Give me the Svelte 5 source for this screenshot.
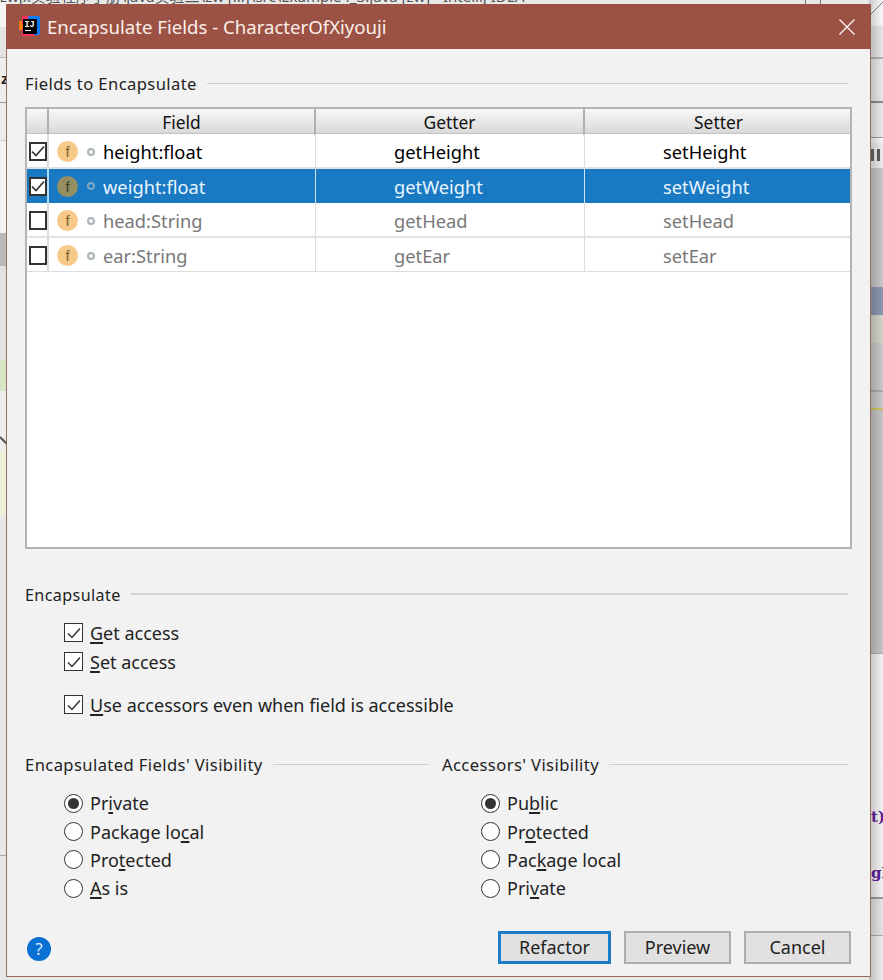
<script>
  const rows = [
    { field: 'height:float', getter: 'getHeight', setter: 'setHeight', on: true, sel: false },
    { field: 'weight:float', getter: 'getWeight', setter: 'setWeight', on: true, sel: true },
    { field: 'head:String', getter: 'getHead', setter: 'setHead', on: false, sel: false },
    { field: 'ear:String', getter: 'getEar', setter: 'setEar', on: false, sel: false }
  ];
  const leftBands = [
    [0, 27, '#f4f4f4'], [27, 30, '#e4e4e4'], [57, 1, '#bbb'], [58, 44, '#eeeeee'], [102, 1, '#999'],
    [103, 37, '#ececec'], [140, 1, '#ccc'], [141, 92, '#f4f4f4'], [233, 33, '#b9b9b9'], [266, 94, '#e2e2e2'],
    [360, 31, '#d6e6c4'], [391, 60, '#eeeeee'], [451, 64, '#eef2d8'], [515, 340, '#e8e8e8'],
    [855, 1, '#aaa'], [856, 124, '#e8e8e8']
  ];
  const rightBands = [
    [0, 26, '#fafafa'], [26, 31, '#e6e6e6'], [57, 2, '#b4b4b4'], [59, 42, '#e9e9e9'], [101, 2, '#8a8a8a'],
    [103, 34, '#e9e9e9'], [137, 1, '#999'], [138, 5, '#f6f6f6'], [143, 25, '#ececec'], [168, 119, '#c6c6c6'],
    [287, 28, '#8c98b2'], [315, 28, '#d3d3c6'], [343, 47, '#c8c8c8'], [390, 2, '#aaa'], [392, 16, '#c8c8c8'],
    [408, 2, '#cdc65a'], [410, 243, '#c4c4c4'], [653, 1, '#aaa'], [654, 243, '#f3f3f3'], [897, 2, '#9a9a9a'],
    [899, 36, '#e4e4e4'], [935, 1, '#aaa'], [936, 44, '#ececec']
  ];
</script>

<div class="desk">
  <div class="backdrop" aria-hidden="true">
    {#each leftBands as b}
      <div class="band left" style="top:{b[0]}px;height:{b[1]}px;background:{b[2]}"></div>
    {/each}
    {#each rightBands as b}
      <div class="band right" style="top:{b[0]}px;height:{b[1]}px;background:{b[2]}"></div>
    {/each}
    <div class="shade"></div>
    <div class="ide-title">zwjx实验程序手册\java实验二\zw [...]\src\Example4_3.java [zw] - IntelliJ IDEA</div>
    <div class="ide-max"></div>
    <svg class="ide-close" width="12" height="12" viewBox="0 0 12 12"><path d="M0 12 12 0" stroke="#777" fill="none"/></svg>
    <div class="ide-z">z</div>
    <svg class="ide-chev" width="7" height="9" viewBox="0 0 7 9"><path d="M0 1 7 8" stroke="#555" stroke-width="2" fill="none"/></svg>
    <div class="ide-pause"><i></i><i></i></div>
    <div class="ide-code t">t)</div>
    <div class="ide-code g">gh</div>
    <div class="ide-status">11:1 &nbsp; LF &nbsp;&nbsp; 7:81 &nbsp;&nbsp; CRLF &nbsp;&nbsp; UTF-8 &nbsp;&nbsp; 4 &nbsp;&nbsp;&nbsp;&nbsp;&nbsp; 8</div>
  </div>

  <div class="dialog">
    <header class="titlebar">
      <svg class="logo" width="21" height="21" viewBox="0 0 21 21">
        <rect x="0" y="5" width="8" height="9" fill="#f97a12"/>
        <rect x="3" y="0" width="9" height="8" fill="#fe315d"/>
        <rect x="9" y="0" width="12" height="19" rx="2" fill="#087cfa"/>
        <rect x="3" y="13" width="12" height="7" fill="#fe315d"/>
        <rect x="4" y="3" width="14" height="15" fill="#000"/>
        <text x="5.5" y="11" class="logo-t">IJ</text>
        <rect x="6" y="14" width="6" height="1" fill="#fff"/>
      </svg>
      <span class="title">Encapsulate Fields - CharacterOfXiyouji</span>
      <svg class="close" width="16" height="16" viewBox="0 0 16 16"><path d="M0.5 0.5 15.5 15.5M15.5 0.5 0.5 15.5" stroke="#fff" stroke-width="1.2" fill="none"/></svg>
    </header>

    <div class="content">
      <div class="section s1"><span>Fields to Encapsulate</span><i></i></div>

      <div class="table">
        <div class="thead">
          <div class="th"></div>
          <div class="th">Field</div>
          <div class="th">Getter</div>
          <div class="th">Setter</div>
        </div>
        {#each rows as r, i}
          <div class="row" class:sel={r.sel} class:off={!r.on} class:last={i === 3}>
            <div class="cell cc"><span class="tcheck">{#if r.on}<svg width="14" height="14" viewBox="0 0 14 14"><path d="M1 7.5 5 11.5 13 2.5" stroke="#333" stroke-width="1.7" fill="none"/></svg>{/if}</span></div>
            <div class="cell fc">
              <span class="ficon">f</span>
              <span class="dot"></span>
              <span>{r.field}</span>
            </div>
            <div class="cell gc">{r.getter}</div>
            <div class="cell sc">{r.setter}</div>
          </div>
        {/each}
      </div>

      <div class="section s2"><span>Encapsulate</span><i></i></div>

      <div class="checks">
        <label class="opt"><span class="box"><svg width="14" height="14" viewBox="0 0 14 14"><path d="M1 7.5 5 11.5 13 2.5" stroke="#333" stroke-width="1.5" fill="none"/></svg></span><span><u>G</u>et access</span></label>
        <label class="opt"><span class="box"><svg width="14" height="14" viewBox="0 0 14 14"><path d="M1 7.5 5 11.5 13 2.5" stroke="#333" stroke-width="1.5" fill="none"/></svg></span><span><u>S</u>et access</span></label>
        <label class="opt use"><span class="box"><svg width="14" height="14" viewBox="0 0 14 14"><path d="M1 7.5 5 11.5 13 2.5" stroke="#333" stroke-width="1.5" fill="none"/></svg></span><span><u>U</u>se accessors even when field is accessible</span></label>
      </div>

      <div class="vis">
        <div class="col c1">
          <div class="section"><span>Encapsulated Fields' Visibility</span><i></i></div>
          <div class="radios">
            <div class="opt r"><span class="radio on"></span><span>Pr<u>i</u>vate</span></div>
            <div class="opt r"><span class="radio"></span><span>Package lo<u>c</u>al</span></div>
            <div class="opt r"><span class="radio"></span><span>Pro<u>t</u>ected</span></div>
            <div class="opt r"><span class="radio"></span><span><u>A</u>s is</span></div>
          </div>
        </div>
        <div class="col c2">
          <div class="section"><span>Accessors' Visibility</span><i></i></div>
          <div class="radios">
            <div class="opt r"><span class="radio on"></span><span>Pu<u>b</u>lic</span></div>
            <div class="opt r"><span class="radio"></span><span>Pr<u>o</u>tected</span></div>
            <div class="opt r"><span class="radio"></span><span>Pac<u>k</u>age local</span></div>
            <div class="opt r"><span class="radio"></span><span>Pri<u>v</u>ate</span></div>
          </div>
        </div>
      </div>

      <div class="footer">
        <span class="help">?</span>
        <div class="buttons">
          <button class="primary">Refactor</button>
          <button class="pv">Preview</button>
          <button class="pv">Cancel</button>
        </div>
      </div>
    </div>
  </div>
</div>

<style>
  :global(body) { margin: 0; background: #e8e8e8; }
  .desk {
    position: relative;
    width: 883px;
    height: 980px;
    overflow: hidden;
    box-sizing: border-box;
    padding: 4px 12px 3px 6px;
    font-family: "Noto Sans", "Open Sans", sans-serif;
    color: #1a1a1a;
  }
  .backdrop { position: absolute; inset: 0; overflow: hidden; }
  .band { position: absolute; }
  .band.left { left: 0; width: 8px; }
  .band.right { right: 0; width: 14px; }
  .shade {
    position: absolute; top: 0; bottom: 0; right: 0; width: 14px;
    background: linear-gradient(90deg, rgba(0,0,0,.2), rgba(0,0,0,0));
  }
  .ide-title {
    position: absolute; top: -12px; left: 0; width: 790px; height: 16px; overflow: hidden;
    white-space: nowrap; font-size: 15px; line-height: 16px; color: #555;
    font-family: "Noto Sans", "Noto Sans CJK SC", sans-serif;
  }
  .ide-max { position: absolute; left: 805px; top: -2px; width: 14px; height: 6px; border: 1px solid #777; border-top: 0; }
  .ide-close { position: absolute; left: 871px; top: 2px; }
  .ide-z { position: absolute; left: 1px; top: 70px; font: bold 15px "Liberation Sans", sans-serif; color: #222; }
  .ide-chev { position: absolute; left: 0; top: 436px; }
  .ide-pause { position: absolute; left: 871px; top: 149px; display: flex; gap: 3px; }
  .ide-pause i { display: block; width: 3px; height: 12px; background: #555; }
  .ide-code { position: absolute; left: 871px; font: bold 15px "DejaVu Serif", serif; color: #551a8b; }
  .ide-code.t { top: 808px; }
  .ide-code.g { top: 864px; }
  .ide-status {
    position: absolute; left: 340px; top: 976px; font-size: 15px; line-height: 18px; color: #444; white-space: pre;
  }

  .dialog {
    position: relative;
    width: 865px;
    height: 973px;
    box-sizing: border-box;
    background: #f2f2f2;
    border: 1px solid #9b6a62;
    border-top: 0;
    display: flex;
    flex-direction: column;
  }
  .titlebar {
    flex: none;
    height: 45px;
    margin: 0 -1px;
    background: #9b5244;
    display: flex;
    align-items: center;
    padding: 0 16px 0 13px;
    color: #fff;
  }
  .logo { flex: none; margin-right: 7px; margin-top: -1px; }
  .logo-t { font: bold 8.5px "Liberation Mono", monospace; fill: #fff; }
  .title { font-size: 18.6px; color: #fbeee9; }
  .close { margin-left: auto; }

  .content { flex: 1; display: flex; flex-direction: column; padding: 0 22px 0 18px; min-height: 0; }

  .section { display: flex; align-items: center; gap: 10px; font-size: 16.6px; line-height: 22px; letter-spacing: .4px; color: #222; }
  .section i { display: block; flex: 1; height: 1px; background: #cfcfcf; margin-top: -2px; }
  .s1 { margin-top: 24px; }
  .s2 { margin-top: 35px; font-size: 16.1px; }
  .s2 i { height: 2px; background: #d4d4d4; }

  .table {
    margin-top: 12px;
    margin-right: -4px;
    height: 442px;
    box-sizing: border-box;
    border: 2px solid #b4b4b4;
    background: #fff;
  }
  .thead {
    display: grid;
    grid-template-columns: 22px 267px 269px 267px;
    height: 25px;
    background: linear-gradient(#f8f8f8, #d9d9d9);
    border-bottom: 1px solid #c4c4c4;
    box-sizing: border-box;
  }
  .th {
    text-align: center;
    font-size: 17.4px;
    line-height: 26px;
    color: #111;
    border-right: 2px solid #b0b0b0;
    box-sizing: border-box;
  }
  .th:last-child { border-right: 0; }
  .row {
    display: grid;
    grid-template-columns: 22px 267px 269px 267px;
    height: 35px;
    box-sizing: border-box;
    border-bottom: 2px solid #e2e2e2;
    font-size: 18.3px;
    color: #000;
    align-items: stretch;
  }
  .row.last { border-bottom: 1px solid #dcdcdc; height: 34px; }
  .row.off { color: #787878; }
  .row.sel { background: #1a79c3; color: #e9f5ff; border-bottom: 0; height: 34px; }
  .cell { display: flex; align-items: center; box-sizing: border-box; border-right: 1px solid #dcdcdc; padding-top: 2px; white-space: nowrap; }
  .cc { border-right: 2px solid #dcdcdc; padding-left: 2px; padding-top: 1px; }
  .sel .cell { border-right-color: #cbe6fb; padding-top: 0; }
  .sel .cc { border-right-color: #a9dcfb; padding-top: 0; }
  .sc { border-right: 0; padding-left: 78px; }
  .gc { padding-left: 78px; }
  .fc { padding-left: 8px; }
  .tcheck {
    display: flex; align-items: center; justify-content: center;
    width: 19px; height: 19px; box-sizing: border-box;
    border: 2px solid #333; background: #fff;
  }
  .ficon {
    width: 21px; height: 21px; border-radius: 50%; flex: none;
    background: #f6c988; color: #7d5e30;
    display: flex; align-items: center; justify-content: center;
    font-size: 15px; line-height: 21px; margin-right: 9px;
    font-family: "Liberation Sans", sans-serif;
  }
  .sel .ficon { background: #948e62; color: #3f3f28; }
  .dot {
    width: 8px; height: 8px; box-sizing: border-box; flex: none;
    border: 2px solid #a9b3b8; border-radius: 50%; margin-right: 8px;
  }
  .sel .dot { border-color: #7fa8c8; }

  .checks { display: flex; flex-direction: column; margin-top: 12px; padding-left: 39px; }
  .opt { display: flex; align-items: center; gap: 7px; height: 29px; font-size: 18px; color: #222; white-space: nowrap; }
  .use { margin-top: 14px; }
  .box {
    width: 19px; height: 19px; box-sizing: border-box; flex: none;
    border: 1px solid #333; background: #fff;
    display: flex; align-items: center; justify-content: center;
  }
  u { text-decoration-thickness: 2px; text-underline-offset: 2px; }

  .vis { display: flex; margin-top: 35px; }
  .col { display: flex; flex-direction: column; }
  .c1 { width: 404px; box-sizing: border-box; }
  .c2 { flex: 1; margin-left: 13px; }
  .radios { display: flex; flex-direction: column; padding-left: 39px; margin-top: 13px; }
  .opt.r { height: 28.4px; }
  .radio {
    width: 19px; height: 19px; box-sizing: border-box; flex: none; border-radius: 50%;
    border: 1.5px solid #333; background: #fff; position: relative; display: block;
  }
  .radio.on::after {
    content: ''; position: absolute; inset: 3px; border-radius: 50%; background: #333;
  }

  .footer { display: flex; align-items: center; justify-content: space-between; margin-top: 28px; margin-right: -3px; }
  .help {
    width: 24px; height: 24px; border-radius: 50%; background: #0a70d2; color: #d9ecff; margin: 4px 0 0 2px;
    display: flex; align-items: center; justify-content: center; font-size: 17px; line-height: 24px;
  }
  .buttons { display: flex; gap: 13px; }
  button {
    font: inherit; font-size: 18px; color: #222; height: 33px; background: #e1e1e1; padding: 0 0 1px;
    box-sizing: border-box; cursor: default;
  }
  .primary { width: 113px; border: 3px solid #1a7dc8; }
  .pv { width: 107px; border: 2px solid #adadad; }
</style>
